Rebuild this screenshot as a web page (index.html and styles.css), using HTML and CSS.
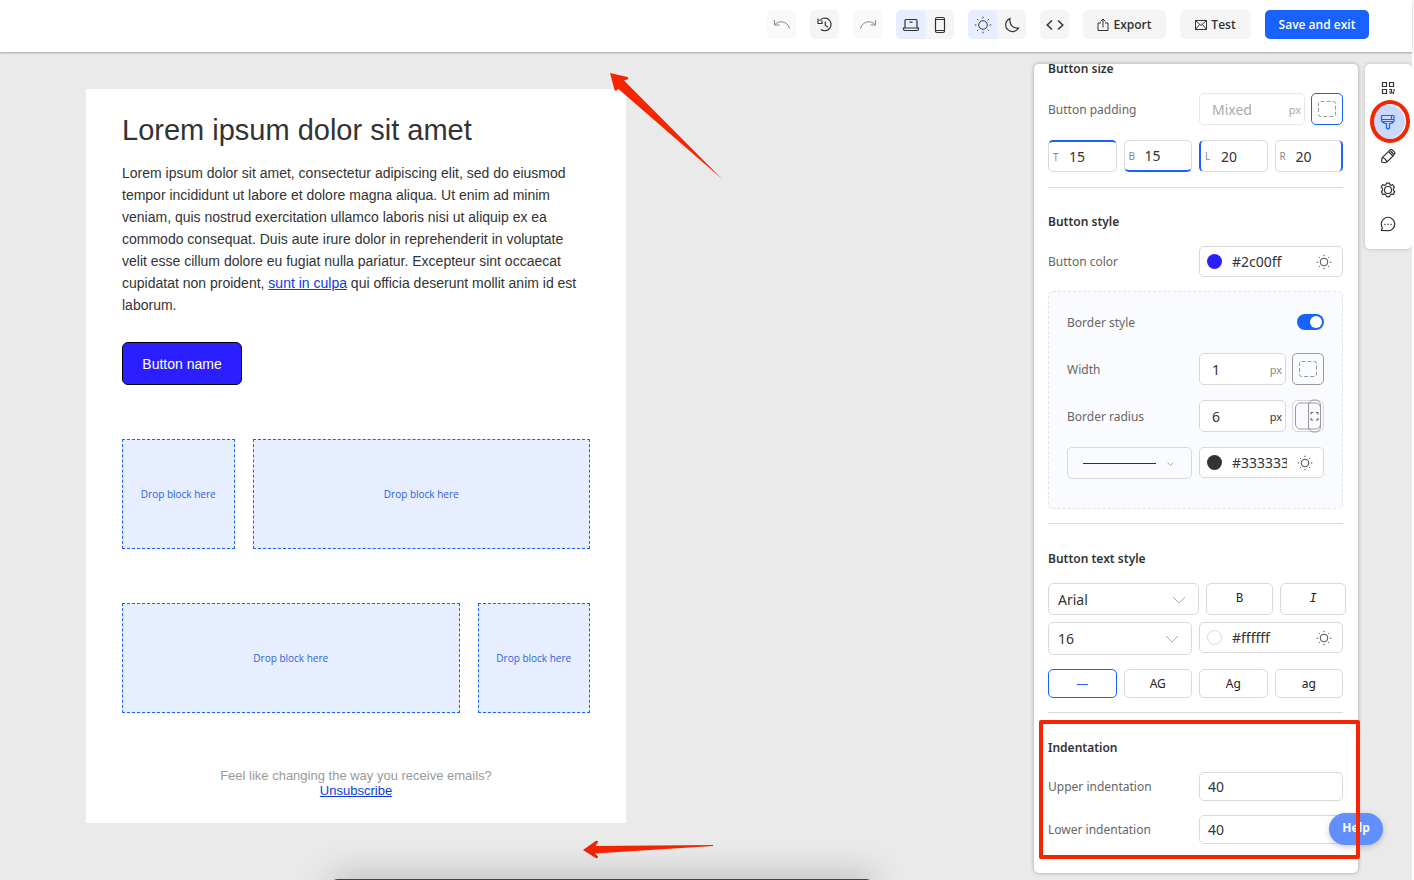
FILE: index.html
```html
<!DOCTYPE html>
<html lang="en">
<head>
    <meta charset="UTF-8">
    <meta name="viewport" content="width=device-width, initial-scale=1.0">
    <title>Email editor</title>
    <link rel="stylesheet" href="styles.css">
</head>
<body>
    <!-- Shared icons -->
    <svg class="sprite" aria-hidden="true">
        <symbol id="sun" viewBox="0 0 18 18">
            <circle cx="9" cy="9" r="4.300"/>
            <path d="M9 .8v1.600M9 15.600v1.600M.8 9h1.600M15.600 9h1.600M3.200 3.200l1.100 1.100M13.700 13.700l1.100 1.100M3.200 14.800l1.100-1.100M13.700 4.300l1.100-1.100"/>
        </symbol>
        <symbol id="square" viewBox="0 0 18 18">
            <rect x=".5" y="1.500" width="17" height="15" rx="2" stroke-dasharray="4 2"/>
        </symbol>
        <symbol id="chevron" viewBox="0 0 14 8">
            <path d="M1 1l6 6 6-6"/>
        </symbol>
    </svg>

    <!-- Top toolbar -->
    <header class="toolbar">
        <button class="tool faded" aria-label="Undo">
            <svg width="18" height="18" viewBox="0 0 18 18"><path d="M1.500 4v5h5M1.700 8.800C5 4.500 14 4 16.500 12.500"/></svg>
        </button>
        <button class="tool" aria-label="History">
            <svg class="medium" width="18" height="18" viewBox="0 0 18 18"><path d="M3.500 5A6.300 6.300 0 1 1 5 13.500M2 2.500v5h4.500M6 4.500v3H2M9.300 5.500v4l2.700 1.500"/></svg>
        </button>
        <button class="tool faded" aria-label="Redo">
            <svg width="18" height="18" viewBox="0 0 18 18"><path d="M16.500 4v5h-5M16.300 8.800C13 4.500 4 4 1.500 12.500"/></svg>
        </button>
        <div class="group">
            <button class="tool active" aria-label="Desktop">
                <svg class="medium" width="18" height="18" viewBox="0 0 18 18"><path d="M3 12V4.500Q3 3.500 4 3.500h10q1 0 1 1V12M1.500 12h15v1q0 1.500-1.500 1.500H3q-1.500 0-1.500-1.500zM7.500 6.200h3"/></svg>
            </button>
            <button class="tool" aria-label="Mobile">
                <svg class="medium" width="18" height="18" viewBox="0 0 18 18"><rect x="4.500" y="1.500" width="9" height="15" rx="1.500"/><path d="M4.500 3.500h9M4.500 14.500h9"/></svg>
            </button>
        </div>
        <div class="group">
            <button class="tool active" aria-label="Light theme">
                <svg width="18" height="18"><use href="#sun"/></svg>
            </button>
            <button class="tool" aria-label="Dark theme">
                <svg class="medium" width="18" height="18" viewBox="0 0 18 18"><path d="M7 2.500a6.800 6.800 0 1 0 8.500 9.500C10 13 6 8.500 7 2.500z"/></svg>
            </button>
        </div>
        <button class="tool" aria-label="Code">
            <svg class="strong" width="18" height="18" viewBox="0 0 18 18"><path d="M6 4.500L1.200 9 6 13.500M12 4.500L16.800 9 12 13.500"/></svg>
        </button>
        <button class="tool export">
            <svg width="12" height="14" viewBox="0 0 12 14"><path d="M4 5H1v7.500h10V5H8M6 9.500V1M3.500 3.500L6 1l2.500 2.500"/></svg>
            Export
        </button>
        <button class="tool test">
            <svg width="12" height="10" viewBox="0 0 12 10"><path d="M.5.5h11v9H.5zM.5.5L6 5.500 11.500.5M.5 9.500l4-5M11.500 9.500l-4-5"/></svg>
            Test
        </button>
        <button class="save">Save and exit</button>
    </header>

    <main class="workspace">
        <!-- Email preview -->
        <article class="email">
            <h1>Lorem ipsum dolor sit amet</h1>
            <p class="text">
                Lorem ipsum dolor sit amet, consectetur adipiscing elit, sed do eiusmod<br>
                tempor incididunt ut labore et dolore magna aliqua. Ut enim ad minim<br>
                veniam, quis nostrud exercitation ullamco laboris nisi ut aliquip ex ea<br>
                commodo consequat. Duis aute irure dolor in reprehenderit in voluptate<br>
                velit esse cillum dolore eu fugiat nulla pariatur. Excepteur sint occaecat<br>
                cupidatat non proident, <a href="#">sunt in culpa</a> qui officia deserunt mollit anim id est<br>
                laborum.
            </p>
            <button class="email-button">Button name</button>
            <div class="drop-row">
                <div class="drop">Drop block here</div>
                <div class="drop">Drop block here</div>
            </div>
            <div class="drop-row reverse">
                <div class="drop">Drop block here</div>
                <div class="drop">Drop block here</div>
            </div>
            <p class="footer">Feel like changing the way you receive emails?<br><a href="#">Unsubscribe</a></p>
        </article>

        <!-- Settings panel -->
        <aside class="panel">
            <section class="section size">
                <h2>Button size</h2>
                <div class="row">
                    <label for="padding">Button padding</label>
                    <div class="pair">
                        <div class="field muted"><input id="padding" type="text" value="Mixed"><span>px</span></div>
                        <button class="side-btn on" aria-label="Separate paddings"><svg width="18" height="18"><use href="#square"/></svg></button>
                    </div>
                </div>
                <div class="four">
                    <div class="field side top"><label for="pt">T</label><input id="pt" type="text" value="15"></div>
                    <div class="field side bottom"><label for="pb">B</label><input id="pb" type="text" value="15"></div>
                    <div class="field side left"><label for="pl">L</label><input id="pl" type="text" value="20"></div>
                    <div class="field side right"><label for="pr">R</label><input id="pr" type="text" value="20"></div>
                </div>
            </section>

            <section class="section">
                <h2>Button style</h2>
                <div class="row">
                    <label for="color">Button color</label>
                    <div class="field color">
                        <i class="dot blue"></i><input id="color" type="text" value="#2c00ff">
                        <svg width="16" height="16"><use href="#sun"/></svg>
                    </div>
                </div>
                <div class="border-box">
                    <div class="row">
                        <label for="border">Border style</label>
                        <input id="border" class="switch" type="checkbox" checked>
                    </div>
                    <div class="row">
                        <label for="width">Width</label>
                        <div class="pair">
                            <div class="field"><input id="width" type="text" value="1"><span>px</span></div>
                            <button class="side-btn" aria-label="Separate widths"><svg width="18" height="18"><use href="#square"/></svg></button>
                        </div>
                    </div>
                    <div class="row">
                        <label for="radius">Border radius</label>
                        <div class="pair">
                            <div class="field dark"><input id="radius" type="text" value="6"><span>px</span></div>
                            <button class="side-btn light" aria-label="Separate radiuses">
                                <svg width="32" height="34" viewBox="0 0 32 34">
                                    <rect x="3.500" y="4" width="25" height="26" rx="5"/>
                                    <rect x="16.500" y="1" width="12" height="32" rx="5"/>
                                    <path class="corners" d="M19 15.500v-2h2M24 13.500h2v2M26 19v2h-2M21 21h-2v-2"/>
                                </svg>
                            </button>
                        </div>
                    </div>
                    <div class="halves">
                        <div class="select line">
                            <select aria-label="Line style"><option></option></select>
                            <hr>
                            <svg width="7" height="4"><use href="#chevron"/></svg>
                        </div>
                        <div class="field color">
                            <i class="dot dark"></i><input aria-label="Border color" type="text" value="#333333">
                            <svg width="16" height="16"><use href="#sun"/></svg>
                        </div>
                    </div>
                </div>
            </section>

            <section class="section">
                <h2>Button text style</h2>
                <div class="font-row">
                    <div class="select">
                        <select aria-label="Font"><option>Arial</option></select>
                        <svg width="14" height="8"><use href="#chevron"/></svg>
                    </div>
                    <button class="option letter">B</button>
                    <button class="option letter italic">I</button>
                </div>
                <div class="halves font-size">
                    <div class="select">
                        <select aria-label="Font size"><option>16</option></select>
                        <svg width="14" height="8"><use href="#chevron"/></svg>
                    </div>
                    <div class="field color">
                        <i class="dot white"></i><input aria-label="Text color" type="text" value="#ffffff">
                        <svg width="16" height="16"><use href="#sun"/></svg>
                    </div>
                </div>
                <div class="four cases">
                    <button class="option on">—</button>
                    <button class="option">AG</button>
                    <button class="option">Ag</button>
                    <button class="option">ag</button>
                </div>
            </section>

            <section class="section indentation">
                <h2>Indentation</h2>
                <div class="row">
                    <label for="upper">Upper indentation</label>
                    <div class="field"><input id="upper" type="text" value="40"></div>
                </div>
                <div class="row">
                    <label for="lower">Lower indentation</label>
                    <div class="field"><input id="lower" type="text" value="40"></div>
                </div>
            </section>
        </aside>

        <!-- Right rail -->
        <nav class="rail">
            <button aria-label="Blocks">
                <svg width="16" height="16" viewBox="0 0 16 16"><path d="M2.500 2.500h4v4h-4zM9.500 2.500h4v4h-4zM2.500 9.500h4v4h-4zM9 9.500h2.500V12H9M14 9v2.500M13.500 14v-1.500h-2M10 13.500h1.500"/></svg>
            </button>
            <button class="current" aria-label="Styles">
                <svg width="16" height="16" viewBox="0 0 16 16"><path d="M2.500 1.500h11q.5 0 .5.500v5q0 .5-.5.500h-11Q1.500 7.500 1.500 6.500v-4q0-1 1-1zM1.500 5.500H14M11.500 1.500v4M2.500 7.500Q3 9.500 6.500 9.500v4.500q1.500 1.500 3 0V9.500Q13 9.500 13.500 7.500"/></svg>
                <span class="ring"></span>
            </button>
            <button aria-label="Design">
                <svg width="16" height="16" viewBox="0 0 16 16"><path d="M8.500 3.500l4.500 4.500-6 6q-2.500 1-5 .2-.8-2.500.3-4.700zM2.500 9.500q3 .8 4.500 4.500M8.500 3.500l1.800-1.800q1-.7 2 .3l2.200 2.200q.8 1 0 1.800L13 8M10.500 3l3 3"/></svg>
            </button>
            <button aria-label="Settings">
                <svg width="16" height="16" viewBox="0 0 16 16"><path d="M6.500 1.200h3l.5 1.700 1 .5 1.700-.6 1.700 2.400-1 1.500.1 1.800 1.300 1.300-1.500 2.600-1.900-.3-1 .7-.8 1.900h-3l-.8-1.900-1.100-.7-1.900.3-1.500-2.600 1.200-1.300V6.700L1.200 5.200l1.500-2.400 1.900.6 1.200-.5z"/><circle cx="8" cy="8" r="3.500"/></svg>
            </button>
            <button aria-label="Comments">
                <svg width="16" height="16" viewBox="0 0 16 16"><path d="M1.500 14.500l.8-3A6.700 6.700 0 1 1 8 14.700z"/><path d="M4.500 8.300h1.200M7.500 8.300h1.200M10.500 8.300h1.200"/></svg>
            </button>
        </nav>

        <button class="help">Help</button>

        <!-- Red marks -->
        <div class="frame"></div>
        <svg class="arrow arrow-top" width="114" height="108" viewBox="0 0 114 108"><path d="M0 0l17.500 4q1.500 1 0 2.500l-3.500 1L112 106 8.500 16 7 17q-1 1.500-2.500 0z"/></svg>
        <svg class="arrow arrow-bottom" width="132" height="20" viewBox="0 0 132 20"><path d="M0 10L13 .8q2.500-.5 2 1.400L12.500 6 130 5v1L12 13.500l3 3q.5 2-2 1.800z"/></svg>
        <div class="dock"></div>
    </main>
</body>
</html>
```
FILE: styles.css
```css
* {
    box-sizing: border-box;
}

body {
    margin: 0;
    padding-right: 2px;
    min-height: 100vh;
    display: flex;
    flex-direction: column;
    font-family: 'Open Sans', 'Noto Sans', sans-serif;
    font-size: 12px;
    color: #333;
    background: #fff;
}

h1, h2, p {
    margin: 0;
}

button, input, select {
    font-family: inherit;
    color: inherit;
    margin: 0;
    padding: 0;
}

button {
    cursor: pointer;
}

svg {
    fill: none;
    stroke: #333;
    flex-shrink: 0;
}

.sprite {
    position: absolute;
    width: 0;
    height: 0;
}

/* Toolbar */
.toolbar {
    position: relative;
    z-index: 1;
    height: 52px;
    padding: 10px 43px 13px;
    display: flex;
    justify-content: flex-end;
    gap: 14px;
    background: #fff;
    box-shadow: 0 1px 2px rgba(0, 0, 0, 0.3);
}

.group {
    display: flex;
    border-radius: 5px;
    overflow: hidden;
}

.group .tool {
    border-radius: 0;
}

.tool {
    width: 29px;
    height: 29px;
    display: flex;
    align-items: center;
    justify-content: center;
    gap: 4px;
    border: none;
    border-radius: 5px;
    background: #f5f5f5;
    font-size: 12px;
    font-weight: 600;
}

.tool.active {
    background: #e6eeff;
}

.tool.faded {
    background: #f9f9f9;
}

.tool.faded svg {
    stroke: #888;
}

.medium {
    stroke-width: 1.2;
}

.strong {
    stroke-width: 1.5;
}

.tool.export {
    width: 83px;
}

.tool.test {
    width: 71px;
}

.save {
    width: 104px;
    height: 29px;
    border: none;
    border-radius: 5px;
    background: #1a62ff;
    color: #fff;
    font-size: 12px;
    font-weight: 600;
}

/* Workspace */
.workspace {
    position: relative;
    flex: 1;
    display: flex;
    align-items: flex-start;
    padding-top: 12px;
    overflow: hidden;
    background: #eaeaea;
}

.email {
    width: 540px;
    margin: 25px auto 0 86px;
    padding: 25px 36px;
    background: #fff;
    font-family: 'Liberation Sans', Arial, sans-serif;
}

.email a {
    color: #0b3be0;
}

.email h1 {
    font-size: 29px;
    font-weight: normal;
    line-height: 32px;
    margin-bottom: 16px;
}

.text {
    font-size: 14px;
    line-height: 22px;
    white-space: nowrap;
}

.email-button {
    display: block;
    width: 120px;
    height: 43px;
    margin: 26px 0 54px;
    border: 1px solid #000;
    border-radius: 6px;
    background: #2c1fff;
    color: #fff;
    font-size: 14px;
}

.drop-row {
    display: grid;
    grid-template-columns: 1fr 3fr;
    gap: 18px;
    margin-bottom: 54px;
}

.drop-row.reverse {
    grid-template-columns: 3fr 1fr;
}

.drop {
    height: 110px;
    display: flex;
    align-items: center;
    justify-content: center;
    border: 1px dashed #1a62ff;
    background: #e7eeff;
    color: #2b62dd;
    font-family: 'Open Sans', sans-serif;
    font-size: 10px;
}

.footer {
    padding-top: 1px;
    font-size: 13px;
    line-height: 15px;
    text-align: center;
    color: #999;
}

/* Settings panel */
.panel {
    width: 324px;
    height: 809px;
    padding: 0 15px 0 14px;
    border-radius: 5px;
    background: #fff;
    font-family: 'Noto Sans', 'Open Sans', sans-serif;
    box-shadow: 0 0 4px rgba(0, 0, 0, 0.3);
    overflow: hidden;
}

.section {
    padding: 24px 0 14px;
    border-bottom: 1px solid #d9d9d9;
}

.section.size {
    padding: 0 0 15px;
    margin-top: -5px;
}

.section.size h2 {
    margin-bottom: 14px;
}

.section h2 {
    margin-bottom: 14px;
    font-size: 12px;
    line-height: 20px;
    font-weight: 600;
}

.row {
    display: flex;
    align-items: center;
    justify-content: space-between;
}

.row > label {
    color: #666;
}

.row > .field, .panel > .section > .row > .pair {
    width: 144px;
}

.pair {
    width: 125px;
    display: flex;
    gap: 6px;
}

.field {
    flex: 1;
    min-width: 0;
    height: 32px;
    display: flex;
    align-items: center;
    border: 1px solid #d9d9d9;
    border-radius: 5px;
    background: #fff;
    overflow: hidden;
}

.row > .field {
    flex: none;
}

.field input {
    flex: 1;
    width: 0;
    min-width: 0;
    padding-left: 12px;
    border: none;
    outline: none;
    background: none;
    font-size: 14px;
}

.field span {
    padding-right: 3px;
    color: #888;
    font-size: 11px;
}

.field.dark span {
    color: #333;
}

.field.muted, .field.muted input, .field.muted span {
    color: #aaa;
    border-color: #e6e6e6;
}

.side-btn {
    width: 32px;
    height: 32px;
    display: flex;
    align-items: center;
    justify-content: center;
    border: 1px solid #999;
    border-radius: 5px;
    background: none;
}

.side-btn.on {
    border-color: #1a62ff;
}

.side-btn.light {
    border-color: #d9d9d9;
}

.side-btn svg {
    stroke: #999;
}

.side-btn .corners {
    stroke: #555;
}

.four {
    display: grid;
    grid-template-columns: repeat(4, 1fr);
    gap: 7px;
    margin-top: 15px;
}

.side label {
    width: 8px;
    margin-left: 4px;
    color: #888;
    font-size: 10px;
}

.side input {
    padding-left: 8px;
}

.side.top {
    border-top: 2px solid #1a62ff;
}

.side.bottom {
    border-bottom: 2px solid #1a62ff;
}

.side.left {
    border-left: 2px solid #1a62ff;
}

.side.right {
    border-right: 2px solid #1a62ff;
}

.field.color {
    height: 31px;
    padding: 0 10px 0 7px;
}

.color input {
    padding: 0;
    margin: 0 10px 0 10px;
}

.dot {
    width: 15px;
    height: 15px;
    border-radius: 50%;
}

.dot.blue {
    background: #2c1fff;
}

.dot.dark {
    background: #333;
}

.dot.white {
    border: 1px solid #d9d9d9;
}

.border-box {
    display: flex;
    flex-direction: column;
    gap: 15px;
    margin-top: 14px;
    padding: 21px 18px 29px;
    border: 1px dashed #e3e5e9;
    border-radius: 5px;
    background: #fafbfe;
}

.border-box .row:first-child {
    height: 18px;
    margin-bottom: 7px;
}

.switch {
    appearance: none;
    width: 27px;
    height: 16px;
    padding: 2px;
    border-radius: 8px;
    background: #1a62ff;
}

.switch::before {
    content: '';
    display: block;
    width: 12px;
    height: 12px;
    margin-left: 11px;
    border-radius: 50%;
    background: #fff;
}

.halves {
    display: grid;
    grid-template-columns: 1fr 1fr;
    gap: 7px;
}

.select {
    position: relative;
    height: 32px;
}

.select select {
    appearance: none;
    width: 100%;
    height: 100%;
    padding-left: 9px;
    border: 1px solid #d9d9d9;
    border-radius: 5px;
    background: none;
    font-size: 14px;
}

.select svg {
    position: absolute;
    top: 13px;
    right: 13px;
    stroke: #aaa;
}

.select.line svg {
    top: 15px;
    right: 18px;
    stroke-width: 2;
}

.select hr {
    position: absolute;
    top: 16px;
    left: 16px;
    right: 36px;
    margin: 0;
    border: none;
    border-top: 1px solid #333;
}

.font-row {
    display: grid;
    grid-template-columns: 151px 67px 66px;
    gap: 7px;
    margin: 0 -3px 7px 0;
}

.font-size .select {
    height: 33px;
}

.option {
    border: 1px solid #d9d9d9;
    border-radius: 5px;
    background: #fff;
    color: #222;
    font-size: 12px;
}

.option.on {
    border-color: #1a62ff;
    color: #1a62ff;
}

.letter {
    font-family: 'Liberation Mono', monospace;
}

.italic {
    font-style: italic;
}

.cases {
    margin-top: 14px;
}

.cases .option {
    height: 29px;
}

.section:nth-child(n+3) {
    padding-top: 25px;
}

.section.indentation {
    padding-bottom: 0;
    border-bottom: none;
}

.indentation .field {
    height: 29px;
}

.indentation .field input {
    padding-left: 8px;
}

.indentation .row + .row {
    margin-top: 14px;
}

/* Rail */
.rail {
    width: 47px;
    margin-left: 7px;
    padding: 7px 2px 8px 0;
    display: flex;
    flex-direction: column;
    align-items: center;
    border-radius: 5px;
    background: #fff;
    box-shadow: 0 0 4px rgba(0, 0, 0, 0.2);
}

.rail button {
    position: relative;
    width: 34px;
    height: 34px;
    display: flex;
    align-items: center;
    justify-content: center;
    border: none;
    border-radius: 50%;
    background: none;
}

.rail svg {
    stroke-width: 1.2;
}

.rail .current {
    background: #c9d9ff;
}

.rail .current svg {
    stroke: #1a62ff;
}

.help {
    position: absolute;
    right: 29px;
    bottom: 35px;
    width: 54px;
    height: 32px;
    padding-bottom: 3px;
    border: none;
    border-radius: 16px;
    background: #628fff;
    color: #fff;
    font-size: 12px;
    font-weight: bold;
    box-shadow: 0 2px 6px rgba(0, 0, 0, 0.2);
}

/* Red marks */
.ring {
    position: absolute;
    top: -5px;
    left: -1px;
    width: 40px;
    height: 43px;
    border: 4px solid #f42500;
    border-radius: 50%;
}

.frame {
    position: absolute;
    right: 52px;
    bottom: 21px;
    width: 321px;
    height: 139px;
    border: 4px solid #f42500;
    border-radius: 2px;
}

.arrow {
    position: absolute;
    fill: #f42500;
    stroke: none;
}

.arrow-top {
    top: 21px;
    left: 610px;
}

.arrow-bottom {
    top: 788px;
    left: 583px;
}

.dock {
    position: absolute;
    left: 330px;
    bottom: -19px;
    width: 544px;
    height: 20px;
    border-radius: 8px;
    background: #444;
    box-shadow: 0 0 36px rgba(0, 0, 0, 0.3);
}
```
